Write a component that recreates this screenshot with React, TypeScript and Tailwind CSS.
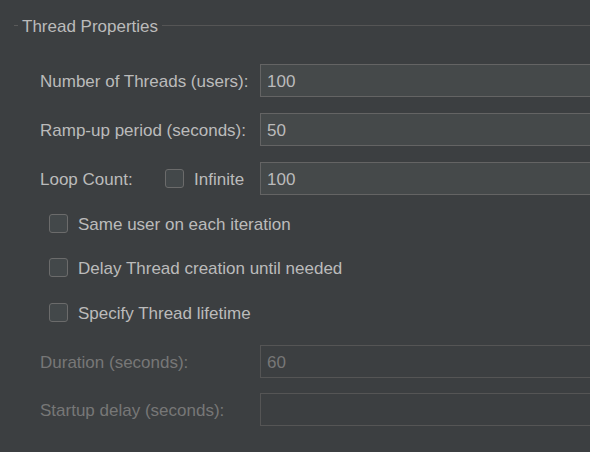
function TextRow({
  label,
  value,
  disabled = false,
}: {
  label: string;
  value: string;
  disabled?: boolean;
}) {
  return (
    <div className="flex items-center h-[33px]">
      <div
        className={`w-[260px] shrink-0 pl-[40px] pt-[2px] whitespace-nowrap ${
          disabled ? "text-[#777777]" : "text-[#bbbbbb]"
        }`}
      >
        {label}
      </div>
      <Field value={value} disabled={disabled} />
    </div>
  );
}

function Field({ value, disabled = false }: { value: string; disabled?: boolean }) {
  return (
    <div
      className={`h-[33px] w-[360px] shrink-0 flex items-center pl-[6px] pt-[2px] border ${
        disabled
          ? "bg-[#3c3f41] border-[#555555] text-[#777777]"
          : "bg-[#45494a] border-[#646464] text-[#bbbbbb]"
      }`}
    >
      {value}
    </div>
  );
}

function CheckBox() {
  return (
    <span className="inline-block w-[19px] h-[19px] shrink-0 rounded-[3px] border border-[#6b6b6b] bg-[#43484a]" />
  );
}

function CheckRow({ label }: { label: string }) {
  return (
    <div className="flex items-center h-[19px] pl-[49px] gap-[10px] text-[#bbbbbb] whitespace-nowrap">
      <CheckBox />
      <span className="pt-[2px]">{label}</span>
    </div>
  );
}

export default function App() {
  return (
    <div
      className="w-[590px] h-[452px] overflow-hidden bg-[#3c3f41] text-[17px] leading-none"
      style={{ fontFamily: '"Liberation Sans", Arial, sans-serif' }}
    >
      <div className="flex items-center h-[50px] pl-[14px]">
        <div className="w-[4px] h-px bg-[#5a5a5a]" />
        <div className="px-[4px] pt-[2px] text-[#bbbbbb] whitespace-nowrap">Thread Properties</div>
        <div className="flex-1 h-px bg-[#555555]" />
      </div>

      <div className="mt-[14px] flex flex-col gap-[16px]">
        <TextRow label="Number of Threads (users):" value="100" />
        <TextRow label="Ramp-up period (seconds):" value="50" />
        <div className="flex items-center h-[33px] text-[#bbbbbb]">
          <div className="w-[260px] shrink-0 pl-[40px] flex items-center whitespace-nowrap">
            <span className="w-[125px] shrink-0 pt-[2px]">Loop Count:</span>
            <CheckBox />
            <span className="ml-[10px] pt-[2px]">Infinite</span>
          </div>
          <Field value="100" />
        </div>
      </div>

      <div className="mt-[19px]">
        <CheckRow label="Same user on each iteration" />
      </div>
      <div className="mt-[25px]">
        <CheckRow label="Delay Thread creation until needed" />
      </div>
      <div className="mt-[26px]">
        <CheckRow label="Specify Thread lifetime" />
      </div>

      <div className="mt-[23px]">
        <TextRow label="Duration (seconds):" value="60" disabled />
      </div>
      <div className="mt-[15px]">
        <TextRow label="Startup delay (seconds):" value="" disabled />
      </div>
    </div>
  );
}
